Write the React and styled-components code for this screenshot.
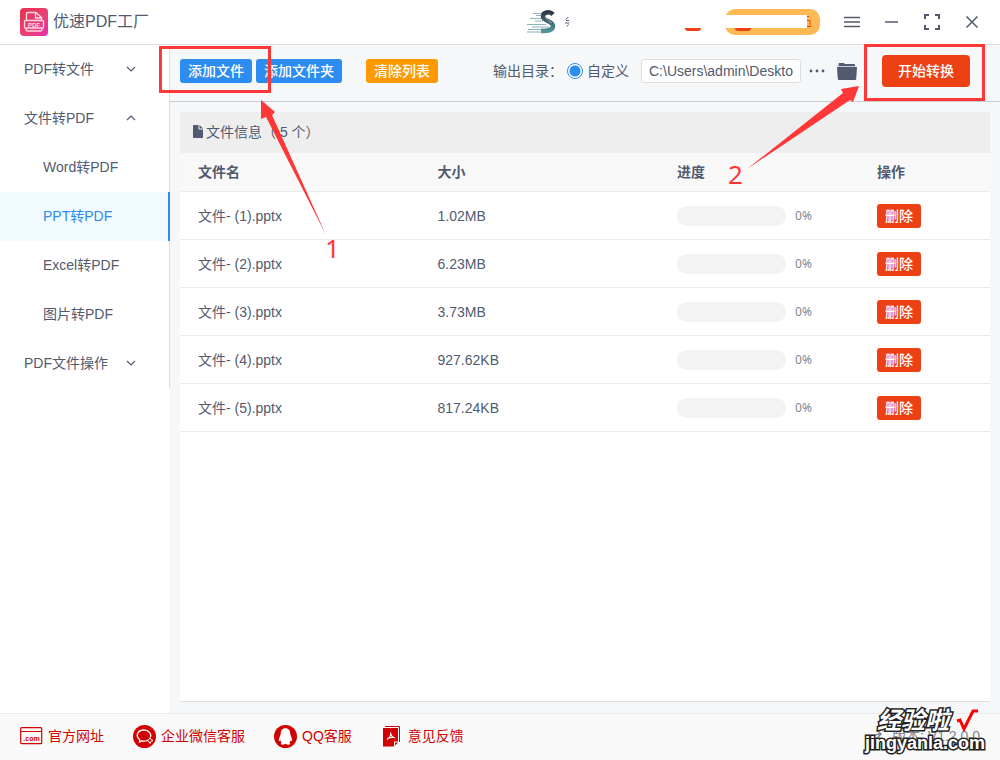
import React, { useState } from 'react'
import styled, { createGlobalStyle, css } from 'styled-components'

const GlobalStyle = createGlobalStyle`
  * {
    box-sizing: border-box;
  }

  body {
    margin: 0;
    font-family: "Liberation Sans", "Noto Sans CJK SC", sans-serif;
    font-size: 14px;
    line-height: 20px;
    color: #515a6e;
    background: #f5f7f9;
  }

  button, input {
    font: inherit;
    color: inherit;
  }
`

const Page = styled.div`
  position: relative;
  display: flex;
  flex-direction: column;
  min-height: 100vh;
`

const Header = styled.header`
  display: flex;
  align-items: center;
  height: 45px;
  padding: 0 8px 0 20px;
  background: white;
  border-bottom: 1px solid #dcdee2;
`

const Title = styled.h1`
  flex: 1;
  margin: 0 0 0 5px;
  font-size: 16px;
  font-weight: normal;
  line-height: 22px;
`

const Account = styled.div`
  display: flex;
  align-items: center;
  margin-right: 12px;
`

const NameMark = styled.svg`
  margin-left: 8px;
`

const RedTab = styled.span`
  align-self: flex-end;
  width: 16px;
  height: 3px;
  margin: 0 0 4px ${props => props.$left}px;
  background: #ed4014;
  border-radius: 0 0 6px 6px;
`

const Pill = styled.button`
  display: flex;
  flex-direction: column;
  width: 95px;
  height: 26px;
  margin-left: 24px;
  padding: 6px 0 0;
  border: 0;
  border-radius: 10px;
  background: #ffb954;
  overflow: hidden;
`

const PillLabel = styled.span`
  display: flex;
  width: 86px;
  height: 13px;
  background: linear-gradient(to right, white 82px, transparent 82px);
  justify-content: flex-end;
`

const PillTab = styled.span`
  width: 16px;
  height: 3px;
  margin-left: 10px;
  background: #ed4014;
  border-radius: 0 0 6px 6px;
`

const WindowButton = styled.button`
  display: flex;
  align-items: center;
  justify-content: center;
  width: 40px;
  height: 40px;
  padding: 0;
  border: 0;
  background: none;
`

const Body = styled.div`
  display: flex;
  flex: 1;
`

const Sidebar = styled.aside`
  width: 170px;
  background: white;
`

const Menu = styled.nav`
  border-right: 1px solid #dcdee2;
`

const menuItem = css`
  display: flex;
  align-items: center;
  height: 49px;
`

const MenuGroup = styled.button`
  ${menuItem}
  justify-content: space-between;
  width: 100%;
  padding: 0 33px 2px 24px;
  border: 0;
  background: none;
  text-align: left;
`

const MenuLink = styled.a`
  ${menuItem}
  margin-right: -1px;
  padding: 0 0 2px 43px;
  color: inherit;
  text-decoration: none;

  ${props => props.$active && css`
    color: #2d8cf0;
    background: #f0faff;
    border-right: 2px solid #2d8cf0;
  `}
`

const Main = styled.main`
  display: flex;
  flex-direction: column;
  flex: 1;
  min-width: 0;
`

const Toolbar = styled.div`
  display: flex;
  align-items: center;
  justify-content: space-between;
  height: 57px;
  padding: 0 30px 4px 10px;
  border-bottom: 1px solid #c9cbd0;
`

const Group = styled.div`
  display: flex;
  align-items: center;
`

const colors = {
  primary: '#2d8cf0',
  warning: '#ff9900',
  error: '#ed4014',
}

const Button = styled.button`
  height: ${props => props.$large ? 32 : 24}px;
  margin-left: ${props => props.$gap || 0}px;
  padding: 0 ${props => props.$large ? 16 : 8}px;
  border: 0;
  border-radius: ${props => props.$large ? 4 : 3}px;
  background: ${props => colors[props.$type]};
  color: white;
  font-weight: 500;
  line-height: 20px;
  white-space: nowrap;
`

const Radio = styled.input`
  appearance: none;
  width: 16px;
  height: 16px;
  margin: 0 4px;
  border: 1px solid #2d8cf0;
  border-radius: 50%;
  background: radial-gradient(circle, #2d8cf0 5px, white 6px);
`

const PathInput = styled.input`
  width: 160px;
  height: 24px;
  margin-left: 12px;
  padding: 0 7px;
  border: 1px solid #dcdee2;
  border-radius: 3px;
  background: white;
`

const IconButton = styled.button`
  display: flex;
  margin-left: ${props => props.$gap}px;
  padding: 0;
  border: 0;
  background: none;
`

const Panel = styled.section`
  flex: 1;
  margin: 10px 10px 11px;
  background: white;
  border-bottom: 1px solid #dcdee2;
`

const PanelTitle = styled.h2`
  display: flex;
  align-items: center;
  gap: 3px;
  height: 41px;
  margin: 0;
  padding: 0 0 2px 13px;
  background: #eeeeee;
  font-size: 14px;
  font-weight: normal;
`

const Table = styled.table`
  width: 100%;
  table-layout: fixed;
  border-collapse: separate;
  border-spacing: 0;

  th, td {
    height: 48px;
    padding: 0 18px;
    border-bottom: 1px solid #e8eaec;
    text-align: left;
  }

  th {
    height: 39px;
    background: #f8f8f9;
  }
`

const Column = styled.col`
  width: ${props => props.$width}px;
`

const Progress = styled.div`
  display: flex;
  align-items: center;
  gap: 9px;
`

const Track = styled.div`
  flex: 1;
  height: 20px;
  border-radius: 10px;
  background: #f3f3f3;
  overflow: hidden;
`

const Bar = styled.div`
  height: 100%;
  background: #2d8cf0;
`

const Percent = styled.span`
  flex: 0 0 46px;
  font-family: "Noto Sans", sans-serif;
  font-size: 12px;
  color: #808695;
`

const Footer = styled.footer`
  display: flex;
  align-items: center;
  gap: 29px;
  height: 47px;
  padding: 0 20px 2px;
  background: #f9f9f9;
  border-top: 1px solid #e8eaec;
`

const FooterLink = styled.a`
  display: flex;
  align-items: center;
  gap: 5px;
  color: #d20000;
  text-decoration: none;
`

const Version = styled.span`
  display: flex;
  align-items: center;
  gap: 9px;
  margin-left: auto;
  color: #808695;
`

const Note = styled.svg`
  position: absolute;
  top: 40px;
  ${props => props.$side}: 0;
  pointer-events: none;

  text {
    font-family: "Noto Sans", sans-serif;
    font-size: 26px;
  }
`

const Watermark = styled.div`
  position: absolute;
  right: 15px;
  bottom: 7px;
  display: flex;
  flex-direction: column;
  align-items: flex-end;
  color: white;
  font-weight: bold;
  pointer-events: none;
  paint-order: stroke fill;
  -webkit-text-stroke: 3px #222;
`

const WatermarkName = styled.div`
  display: flex;
  align-items: flex-start;
  gap: 6px;
  padding-right: 6px;
  font-size: 24px;
  font-style: italic;
  line-height: 24px;
`

const WatermarkSite = styled.div`
  font-size: 18px;
  line-height: 20px;
`

const LogoIcon = () => (
  <svg width="28" height="28" viewBox="0 0 28 28">
    <defs>
      <linearGradient id="logo" x1="0" y1="0" x2="1" y2="1">
        <stop offset="0" stopColor="#e92f50" />
        <stop offset=".6" stopColor="#ea4275" />
        <stop offset="1" stopColor="#e82bb0" />
      </linearGradient>
    </defs>
    <rect width="28" height="28" rx="4" fill="url(#logo)" />
    <g fill="none" stroke="#ffdbe5" strokeWidth="1.3" strokeLinejoin="round">
      <path d="M6.500 12V5.500q0-1 1-1h8.500l5.500 5V12M15.500 5v5h5.500" />
      <rect x="4.500" y="12.500" width="19" height="7.500" rx="1" />
      <path d="M6 20v1.500q0 1.500 1.500 1.500h13q1.500 0 1.500-1.500V20" />
    </g>
    <text x="14" y="18.500" textAnchor="middle" fontSize="6" fontWeight="bold" fill="#ffdbe5">PDF</text>
  </svg>
)

const SpeedIcon = () => (
  <svg width="30" height="24" viewBox="0 0 30 24" fill="none">
    <defs>
      <linearGradient id="speed" x1="0" y1="0" x2="0" y2="1">
        <stop offset="0" stopColor="#303747" />
        <stop offset="1" stopColor="#4e9498" />
      </linearGradient>
    </defs>
    <path d="M6 3.500h11M9 5.500h7M3 8.500h12M8 11h8M0 14.500h19M5 17h17M1 19.500h20M0 22h22" stroke="#8eb0b7" strokeWidth="1" />
    <path d="M26 4.500C23 1 16 2 16 6.500C16 11 26 11 26 16C26 21 20 21 14 21" stroke="url(#speed)" strokeWidth="4.500" />
    <path d="M18 7q2 3 7 6" stroke="#b3c9d0" strokeWidth=".7" />
  </svg>
)

const Chevron = ({ up }) => (
  <svg width="10" height="6" viewBox="0 0 10 6" fill="none" stroke="#515a6e" strokeWidth="1.200">
    <path d={up ? 'M1 5l4-4 4 4' : 'M1 1l4 4 4-4'} />
  </svg>
)

const WindowIcon = ({ d, width = 1.5 }) => (
  <svg width="16" height="16" viewBox="0 0 16 16" fill="none" stroke="#515a6e" strokeWidth={width}>
    <path d={d} />
  </svg>
)

const FileIcon = () => (
  <svg width="10" height="13" viewBox="0 0 10 13" fill="#515a6e">
    <path d="M1 0h4.500v4.500H10V12q0 1-1 1H1q-1 0-1-1V1q0-1 1-1zM6.500 0L10 3.500H6.500z" />
  </svg>
)

const FolderIcon = () => (
  <svg width="20" height="17" viewBox="0 0 20 17" fill="#515a6e">
    <path d="M1.500 3V1q0-1 1-1h4q1 0 1.300 1h9.200q1 0 1 1v1z" />
    <path d="M0 4.500q0-.8 1-.8h18q1 0 1 .8l-.8 11.500q-.1 1-1.200 1H2q-1.100 0-1.200-1z" />
  </svg>
)

const SiteIcon = () => (
  <svg width="23" height="18" viewBox="0 0 23 18">
    <rect x=".7" y=".7" width="21" height="16" rx="1" fill="none" stroke="#d20000" strokeWidth="1.200" />
    <path d="M1 4.500h21" stroke="#d20000" />
    <text x="11.500" y="14" textAnchor="middle" fontSize="7" fontWeight="bold" fill="#d20000">.com</text>
  </svg>
)

const WechatIcon = () => (
  <svg width="23" height="23" viewBox="0 0 23 23">
    <circle cx="11.500" cy="11.500" r="11.500" fill="#d20000" />
    <path d="M14 15.500q-2 1-5 .300L6.500 17l.2-2.300C1.500 10 5.500 5 11 5c5 0 7.500 4 6.500 7" fill="none" stroke="#fff" strokeWidth="1.300" />
    <path d="M17 12.500l1 2 2 1-2 1-1 2-1-2-2-1 2-1z" fill="#d20000" stroke="#fff" strokeWidth="1" />
  </svg>
)

const QQIcon = () => (
  <svg width="23" height="23" viewBox="0 0 24 24">
    <circle cx="12" cy="12" r="12" fill="#d20000" />
    <path d="M12 3.500c3.500 0 5 2.500 5 6 0 1.500 2 4 2 6.500 0 1.200-.8 1-1.600-.1-.3 1.300-.8 1.900-1.400 2.400 1.500.8 1 2.200-.8 2.200-1.400 0-2.400-.4-3.200-1-.8.600-1.800 1-3.200 1-1.800 0-2.300-1.400-.8-2.200-.6-.5-1.100-1.100-1.400-2.400-.8 1.100-1.600 1.300-1.600.1 0-2.500 2-5 2-6.500 0-3.500 1.500-6 5-6z" fill="#fff" />
  </svg>
)

const FeedbackIcon = () => (
  <svg width="22" height="22" viewBox="0 0 22 22">
    <path d="M4 1.500h14.500V17" fill="none" stroke="#d20000" strokeWidth="1" />
    <path d="M2 3h15v13.500h-4V21.500H2zM14 17.500h3L14 20.500z" fill="#d20000" />
    <path d="M9.500 7.500q1 4-3.500 7M9.500 7.500q.5 4.500 4.500 5.500M6.500 13.500q3-1.500 7-1" fill="none" stroke="#fff" strokeWidth="1.100" />
  </svg>
)

const files = [
  { name: '文件- (1).pptx', size: '1.02MB', progress: 0 },
  { name: '文件- (2).pptx', size: '6.23MB', progress: 0 },
  { name: '文件- (3).pptx', size: '3.73MB', progress: 0 },
  { name: '文件- (4).pptx', size: '927.62KB', progress: 0 },
  { name: '文件- (5).pptx', size: '817.24KB', progress: 0 },
]

const formats = ['Word转PDF', 'PPT转PDF', 'Excel转PDF', '图片转PDF']

const windowIcons = [
  { label: '菜单', d: 'M0 3.500h16M0 8h16M0 12.500h16' },
  { label: '最小化', d: 'M1 8h13' },
  { label: '最大化', d: 'M1 5V1h4M11 1h4v4M15 11v4h-4M5 15H1v-4', width: 2 },
  { label: '关闭', d: 'M2.500 2.500l11 11M13.500 2.500l-11 11' },
]

const FileRow = ({ file }) => (
  <tr>
    <td>{file.name}</td>
    <td>{file.size}</td>
    <td>
      <Progress>
        <Track>
          <Bar style={{ width: `${file.progress}%` }} />
        </Track>
        <Percent>{file.progress}%</Percent>
      </Progress>
    </td>
    <td><Button $type="error">删除</Button></td>
  </tr>
)

export default function App () {
  const [active, setActive] = useState('PPT转PDF')
  const [path, setPath] = useState('C:\\Users\\admin\\Deskto')

  return (
    <Page>
      <GlobalStyle />
      <Header>
        <LogoIcon />
        <Title>优速PDF工厂</Title>
        <Account>
          <SpeedIcon />
          <NameMark width="4" height="10" viewBox="0 0 4 10" fill="none" stroke="#515a6e">
            <path d="M3.500 0L.5 2.500M1 3.500h3M0 6h4M3.500 7.500L2 9.500" />
          </NameMark>
          <RedTab $left={116} />
          <Pill aria-label="会员">
            <PillLabel>
              <svg width="4" height="13" viewBox="0 0 4 13" fill="none" stroke="#ed4014">
                <path d="M0 1.500h2M0 5.500h3v5M0 11.500h4" />
              </svg>
            </PillLabel>
            <PillTab />
          </Pill>
        </Account>
        {windowIcons.map(({ label, d, width }) => (
          <WindowButton key={label} aria-label={label}>
            <WindowIcon d={d} width={width} />
          </WindowButton>
        ))}
      </Header>

      <Body>
        <Sidebar>
          <Menu>
            <MenuGroup>PDF转文件<Chevron /></MenuGroup>
            <MenuGroup>文件转PDF<Chevron up /></MenuGroup>
            {formats.map(format => (
              <MenuLink
                key={format}
                href="#"
                $active={format === active}
                onClick={() => setActive(format)}>
                {format}
              </MenuLink>
            ))}
            <MenuGroup>PDF文件操作<Chevron /></MenuGroup>
          </Menu>
        </Sidebar>

        <Main>
          <Toolbar>
            <Group>
              <Button $type="primary">添加文件</Button>
              <Button $type="primary" $gap={4}>添加文件夹</Button>
              <Button $type="warning" $gap={24}>清除列表</Button>
            </Group>
            <Group>
              <span>输出目录：</span>
              <Radio type="radio" id="custom" name="output" defaultChecked />
              <label htmlFor="custom">自定义</label>
              <PathInput
                aria-label="输出目录"
                value={path}
                onChange={e => setPath(e.target.value)} />
              <IconButton $gap={8} aria-label="浏览">
                <svg width="16" height="4" viewBox="0 0 16 4" fill="#515a6e">
                  <circle cx="2" cy="2" r="1.400" />
                  <circle cx="8" cy="2" r="1.400" />
                  <circle cx="14" cy="2" r="1.400" />
                </svg>
              </IconButton>
              <IconButton $gap={12} aria-label="打开文件夹">
                <FolderIcon />
              </IconButton>
              <Button $type="error" $large $gap={25}>开始转换</Button>
            </Group>
          </Toolbar>

          <Panel>
            <PanelTitle><FileIcon />文件信息（ {files.length} 个）</PanelTitle>
            <Table>
              <colgroup>
                <Column />
                <Column />
                <Column $width={200} />
                <Column $width={131} />
              </colgroup>
              <thead>
                <tr>
                  <th>文件名</th>
                  <th>大小</th>
                  <th>进度</th>
                  <th>操作</th>
                </tr>
              </thead>
              <tbody>
                {files.map(file => <FileRow key={file.name} file={file} />)}
              </tbody>
            </Table>
          </Panel>
        </Main>
      </Body>

      <Footer>
        <FooterLink href="#"><SiteIcon />官方网址</FooterLink>
        <FooterLink href="#"><WechatIcon />企业微信客服</FooterLink>
        <FooterLink href="#"><QQIcon />QQ客服</FooterLink>
        <FooterLink href="#"><FeedbackIcon />意见反馈</FooterLink>
        <Version>
          <svg width="12" height="10" viewBox="0 0 12 10" fill="none" stroke="#808695" strokeWidth="1.500">
            <path d="M1 9q1-6 8-6M7 0l3 3-3 3" />
          </svg>
          版本: V1.2.0.0
        </Version>
      </Footer>

      <Note $side="left" width="350" height="230" fill="#ff3737">
        <rect x="160.500" y="7.500" width="109" height="44" fill="none" stroke="#ff3737" strokeWidth="3" />
        <path d="M261 60l14 12-3 3 54 120-60-118-5 2z" />
        <text x="325" y="218">1</text>
      </Note>
      <Note $side="right" width="280" height="160" fill="#ff3737">
        <rect x="145.500" y="5.500" width="118" height="54" fill="none" stroke="#ff3737" strokeWidth="3" />
        <path d="M139 46l-18 3 2 4-96 76 103-69 3 2z" />
        <text x="8" y="144">2</text>
      </Note>

      <Watermark>
        <WatermarkName>
          经验啦
          <svg width="24" height="24" viewBox="0 0 24 24" fill="none" stroke="#ff0000" strokeWidth="3">
            <path d="M2 12l3-1 4 9L18 2h5" />
          </svg>
        </WatermarkName>
        <WatermarkSite>jingyanla.com</WatermarkSite>
      </Watermark>
    </Page>
  )
}
